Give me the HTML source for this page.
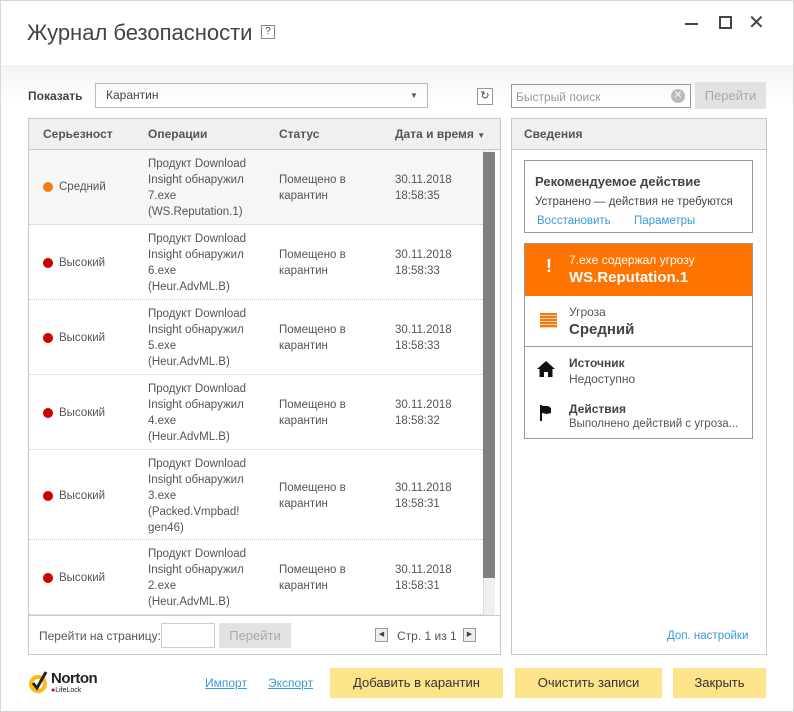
<!DOCTYPE html>
<html><head><meta charset="utf-8"><style>
*{box-sizing:border-box;margin:0;padding:0}
body{width:794px;height:712px;background:#fff;font-family:"Liberation Sans","DejaVu Sans",sans-serif;color:#444;position:relative;overflow:hidden;font-size:12px}
.a{position:absolute}
.win{left:0;top:0;width:794px;height:712px;border:1px solid #d8d8d8}
.grad{left:1px;top:65px;width:792px;height:40px;background:linear-gradient(#f3f3f3,#fff)}
.row{position:absolute;left:29px;width:454px;border-bottom:1px dotted #c8c8c8;font-size:11.5px;line-height:16px;color:#555}
.row div{position:absolute}
.dot{width:10px;height:10px;border-radius:50%;left:14px}
.btn{background:#fde38a;color:#333;font-size:13px;text-align:center;line-height:30px;height:30px}
.lnk{color:#3a9ad9}
</style></head><body>
<div class="a win"></div>
<div class="a grad"></div>
<div class="a" style="left:27px;top:20px;font-size:22px;color:#444">Журнал безопасности</div>
<div class="a" style="left:261px;top:25px;width:14px;height:14px;border:1px solid #888;font-size:10px;line-height:12px;text-align:center">?</div>
<div class="a" style="left:685px;top:23px;width:13px;height:2px;background:#444"></div>
<div class="a" style="left:719px;top:16px;width:13px;height:13px;border:2px solid #444"></div>
<div class="a" style="left:748px;top:10px;font-size:20px;color:#444">✕</div>

<div class="a" style="left:28px;top:89px;font-size:12px;font-weight:bold;color:#444">Показать</div>
<div class="a" style="left:95px;top:83px;width:333px;height:25px;border:1px solid #bbb;font-size:12px;line-height:23px;padding-left:10px">Карантин</div>
<div class="a" style="left:410px;top:91px;font-size:8px;color:#555">▼</div>
<div class="a" style="left:477px;top:88px;width:16px;height:17px;border:1px solid #999;font-size:11px;line-height:15px;text-align:center">↻</div>
<div class="a" style="left:511px;top:84px;width:180px;height:24px;border:1px solid #999;font-size:12px;line-height:24px;padding-left:4px;color:#999">Быстрый поиск</div>
<div class="a" style="left:671px;top:89px;width:14px;height:14px;border-radius:50%;background:#bbb;color:#fff;font-size:10px;line-height:14px;text-align:center">✕</div>
<div class="a" style="left:695px;top:82px;width:71px;height:27px;background:#e2e2e2;color:#aaa;font-size:13px;line-height:27px;text-align:center">Перейти</div>

<div class="a" style="left:28px;top:118px;width:473px;height:537px;border:1px solid #c8c8c8"></div>
<div class="a" style="left:29px;top:119px;width:471px;height:31px;background:#f0f0f0;border-bottom:1px solid #c8c8c8;font-weight:bold;font-size:12px;color:#555;line-height:30px">
<span class="a" style="left:14px">Серьезност</span><span class="a" style="left:119px">Операции</span><span class="a" style="left:250px">Статус</span><span class="a" style="left:366px">Дата и время <span style="font-size:8px">▼</span></span></div>

<div class="row" style="top:150px;height:75px;background:#f6f6f6"><div class="dot" style="top:32px;background:#f07b10"></div><div style="left:30px;top:29px">Средний</div><div style="left:119px;top:6px">Продукт Download<br>Insight обнаружил<br>7.exe<br>(WS.Reputation.1)</div><div style="left:250px;top:22px">Помещено в<br>карантин</div><div style="left:366px;top:22px">30.11.2018<br>18:58:35</div></div>
<div class="row" style="top:225px;height:75px"><div class="dot" style="top:33px;background:#c00"></div><div style="left:30px;top:30px">Высокий</div><div style="left:119px;top:6px">Продукт Download<br>Insight обнаружил<br>6.exe<br>(Heur.AdvML.B)</div><div style="left:250px;top:22px">Помещено в<br>карантин</div><div style="left:366px;top:22px">30.11.2018<br>18:58:33</div></div>
<div class="row" style="top:300px;height:75px"><div class="dot" style="top:33px;background:#c00"></div><div style="left:30px;top:30px">Высокий</div><div style="left:119px;top:6px">Продукт Download<br>Insight обнаружил<br>5.exe<br>(Heur.AdvML.B)</div><div style="left:250px;top:22px">Помещено в<br>карантин</div><div style="left:366px;top:22px">30.11.2018<br>18:58:33</div></div>
<div class="row" style="top:375px;height:75px"><div class="dot" style="top:33px;background:#c00"></div><div style="left:30px;top:30px">Высокий</div><div style="left:119px;top:6px">Продукт Download<br>Insight обнаружил<br>4.exe<br>(Heur.AdvML.B)</div><div style="left:250px;top:22px">Помещено в<br>карантин</div><div style="left:366px;top:22px">30.11.2018<br>18:58:32</div></div>
<div class="row" style="top:450px;height:90px"><div class="dot" style="top:41px;background:#c00"></div><div style="left:30px;top:38px">Высокий</div><div style="left:119px;top:6px">Продукт Download<br>Insight обнаружил<br>3.exe<br>(Packed.Vmpbad!<br>gen46)</div><div style="left:250px;top:30px">Помещено в<br>карантин</div><div style="left:366px;top:30px">30.11.2018<br>18:58:31</div></div>
<div class="row" style="top:540px;height:75px"><div class="dot" style="top:33px;background:#c00"></div><div style="left:30px;top:30px">Высокий</div><div style="left:119px;top:6px">Продукт Download<br>Insight обнаружил<br>2.exe<br>(Heur.AdvML.B)</div><div style="left:250px;top:22px">Помещено в<br>карантин</div><div style="left:366px;top:22px">30.11.2018<br>18:58:31</div></div>
<div class="a" style="left:483px;top:150px;width:12px;height:465px;background:#f0f0f0;border-left:1px solid #ddd"></div>
<div class="a" style="left:483px;top:152px;width:12px;height:426px;background:#808080"></div>
<div class="a" style="left:29px;top:615px;width:471px;height:1px;background:#c8c8c8"></div>
<div class="a" style="left:39px;top:629px;font-size:12px;color:#555">Перейти на страницу:</div>
<div class="a" style="left:161px;top:623px;width:54px;height:25px;border:1px solid #ccc"></div>
<div class="a" style="left:219px;top:623px;width:72px;height:25px;background:#e2e2e2;color:#aaa;font-size:13px;line-height:25px;text-align:center">Перейти</div>
<div class="a" style="left:375px;top:628px;width:13px;height:14px;border:1px solid #999;background:#eee;font-size:7px;line-height:12px;text-align:center">◀</div>
<div class="a" style="left:397px;top:629px;font-size:12px;color:#555">Стр. 1 из 1</div>
<div class="a" style="left:463px;top:628px;width:13px;height:14px;border:1px solid #999;background:#eee;font-size:7px;line-height:12px;text-align:center">▶</div>

<div class="a" style="left:511px;top:118px;width:256px;height:537px;border:1px solid #c8c8c8"></div>
<div class="a" style="left:512px;top:119px;width:254px;height:31px;background:#f0f0f0;border-bottom:1px solid #c8c8c8;font-weight:bold;font-size:12px;color:#555;line-height:30px;padding-left:12px">Сведения</div>
<div class="a" style="left:524px;top:160px;width:229px;height:73px;border:1px solid #999"></div>
<div class="a" style="left:535px;top:174px;font-weight:bold;font-size:13px;color:#444">Рекомендуемое действие</div>
<div class="a" style="left:535px;top:196px;font-size:11.5px;color:#444">Устранено — действия не требуются</div>
<div class="a lnk" style="left:537px;top:215px;font-size:11.5px">Восстановить</div>
<div class="a lnk" style="left:634px;top:215px;font-size:11.5px">Параметры</div>
<div class="a" style="left:524px;top:243px;width:229px;height:196px;border:1px solid #999"></div>
<div class="a" style="left:525px;top:244px;width:227px;height:52px;background:#ff7300"></div>
<div class="a" style="left:546px;top:256px;color:#fff;font-weight:bold;font-size:18px">!</div>
<div class="a" style="left:569px;top:253px;color:#fff;font-size:12px">7.exe содержал угрозу</div>
<div class="a" style="left:569px;top:269px;color:#fff;font-weight:bold;font-size:15px">WS.Reputation.1</div>
<div class="a" style="left:540px;top:313px;width:17px;height:15px;background:repeating-linear-gradient(#f07b10 0 2px,#fbd0a8 2px 3px)"></div>
<div class="a" style="left:569px;top:305px;font-size:12px;color:#555">Угроза</div>
<div class="a" style="left:569px;top:321px;font-weight:bold;font-size:15px;color:#444">Средний</div>
<div class="a" style="left:525px;top:346px;width:227px;height:1px;background:#999"></div>
<svg class="a" style="left:537px;top:360px" width="18" height="18" viewBox="0 0 18 18"><path d="M9 1L0 9h2.5v8h4.5v-5h4v5h4.5V9H18z" fill="#111"/></svg>
<div class="a" style="left:569px;top:356px;font-weight:bold;font-size:12px;color:#444">Источник</div>
<div class="a" style="left:569px;top:372px;font-size:12px;color:#555">Недоступно</div>
<svg class="a" style="left:539px;top:404px" width="16" height="18" viewBox="0 0 16 18"><path d="M1 1h2v16H1zM3 2h6l3 2v5l-4 1-5-1z" fill="#111"/></svg>
<div class="a" style="left:569px;top:402px;font-weight:bold;font-size:12px;color:#444">Действия</div>
<div class="a" style="left:569px;top:418px;font-size:11.5px;color:#555">Выполнено действий с угроза...</div>
<div class="a lnk" style="left:667px;top:630px;font-size:11.5px">Доп. настройки</div>

<svg class="a" style="left:28px;top:671px" width="22" height="24" viewBox="0 0 22 24"><circle cx="10" cy="13" r="9" fill="#fdbb13"/><circle cx="10" cy="13" r="5" fill="#fff"/><path d="M5 12l4 5 9-16" stroke="#222" stroke-width="3" fill="none"/></svg>
<div class="a" style="left:51px;top:670px;font-weight:bold;font-size:15px;color:#222;letter-spacing:-0.5px">Norton</div>
<div class="a" style="left:51px;top:687px;font-size:7px;color:#222"><span style="color:#c00">●</span>LifeLock</div>
<div class="a lnk" style="left:205px;top:676px;font-size:12px;text-decoration:underline">Импорт</div>
<div class="a lnk" style="left:268px;top:676px;font-size:12px;text-decoration:underline">Экспорт</div>
<div class="a btn" style="left:330px;top:668px;width:173px">Добавить в карантин</div>
<div class="a btn" style="left:515px;top:668px;width:147px">Очистить записи</div>
<div class="a btn" style="left:673px;top:668px;width:93px">Закрыть</div>
</body></html>
